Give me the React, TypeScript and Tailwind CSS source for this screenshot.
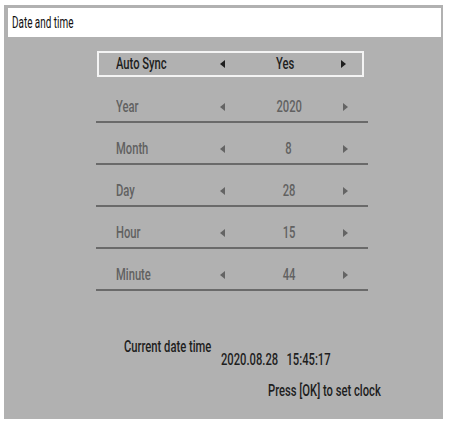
const ROWS = [
  { label: 'Year', value: '2020' },
  { label: 'Month', value: '8' },
  { label: 'Day', value: '28' },
  { label: 'Hour', value: '15' },
  { label: 'Minute', value: '44' },
];

// condensed look: no narrow font installed, so squeeze a regular one
function Narrow({ children, center, scale = 'scale-x-[0.7]' }: { children: React.ReactNode; center?: boolean; scale?: string }) {
  return (
    <span className={`inline-block whitespace-nowrap ${scale} ${center ? 'origin-center' : 'origin-left'}`}>
      {children}
    </span>
  );
}

function Arrow({ dir, dark }: { dir: 'left' | 'right'; dark?: boolean }) {
  const fill = dark ? '#1e1e1e' : '#646464';
  return (
    <svg width="5" height="8" viewBox="0 0 5 8" className="shrink-0">
      {dir === 'left' ? <polygon points="5,0 5,8 0,4" fill={fill} /> : <polygon points="0,0 0,8 5,4" fill={fill} />}
    </svg>
  );
}

export default function App() {
  return (
    <div
      className="w-[449px] h-[425px] bg-white pt-[5px] pl-[4px] font-medium"
      style={{ fontFamily: 'Roboto, "Liberation Sans", sans-serif' }}
    >
      <div className="w-[439px] h-[414px] bg-[#b1b1b1] pt-[3px] pl-[4px] pr-[2px]">
        {/* Title */}
        <div className="h-[29px] bg-white flex items-center pl-[4px] text-[16px] font-normal text-[#111]">
          <Narrow scale="scale-x-[0.62]">Date and time</Narrow>
        </div>

        {/* Menu */}
        <div className="ml-[88px] mt-[14px] w-[272px]">
          <div className="h-[26px] ml-[1px] w-[267px] border-2 border-[#f4f4f4] flex items-center pl-[17px] text-[16px] text-[#1e1e1e] leading-[16px]">
            <span className="w-[104px]"><Narrow>Auto Sync</Narrow></span>
            <Arrow dir="left" dark />
            <span className="w-[116px] pl-[4px] text-center"><Narrow center>Yes</Narrow></span>
            <Arrow dir="right" dark />
          </div>
          <div className="mt-[4px]">
            {ROWS.map(r => (
              <div key={r.label} className="h-[42px] border-b-2 border-[#6a6a6a] flex items-end pb-[6px] pl-[20px] text-[16px] text-[#616161] leading-[16px]">
                <div className="flex items-center h-[16px]">
                  <span className="w-[104px]"><Narrow>{r.label}</Narrow></span>
                  <Arrow dir="left" />
                  <span className="w-[118px] pl-[10px] text-center"><Narrow center>{r.value}</Narrow></span>
                  <Arrow dir="right" />
                </div>
              </div>
            ))}
          </div>
        </div>

        {/* Current */}
        <div className="mt-[48px] ml-[116px] text-[16px] text-[#1e1e1e] leading-[16px]">
          <div><Narrow>Current date time</Narrow></div>
          <div className="ml-[97px] mt-[-3px]"><Narrow>2020.08.28&nbsp;&nbsp;&nbsp;15:45:17</Narrow></div>
          <div className="ml-[144px] mt-[15px]"><Narrow>Press [OK] to set clock</Narrow></div>
        </div>
      </div>
    </div>
  );
}
